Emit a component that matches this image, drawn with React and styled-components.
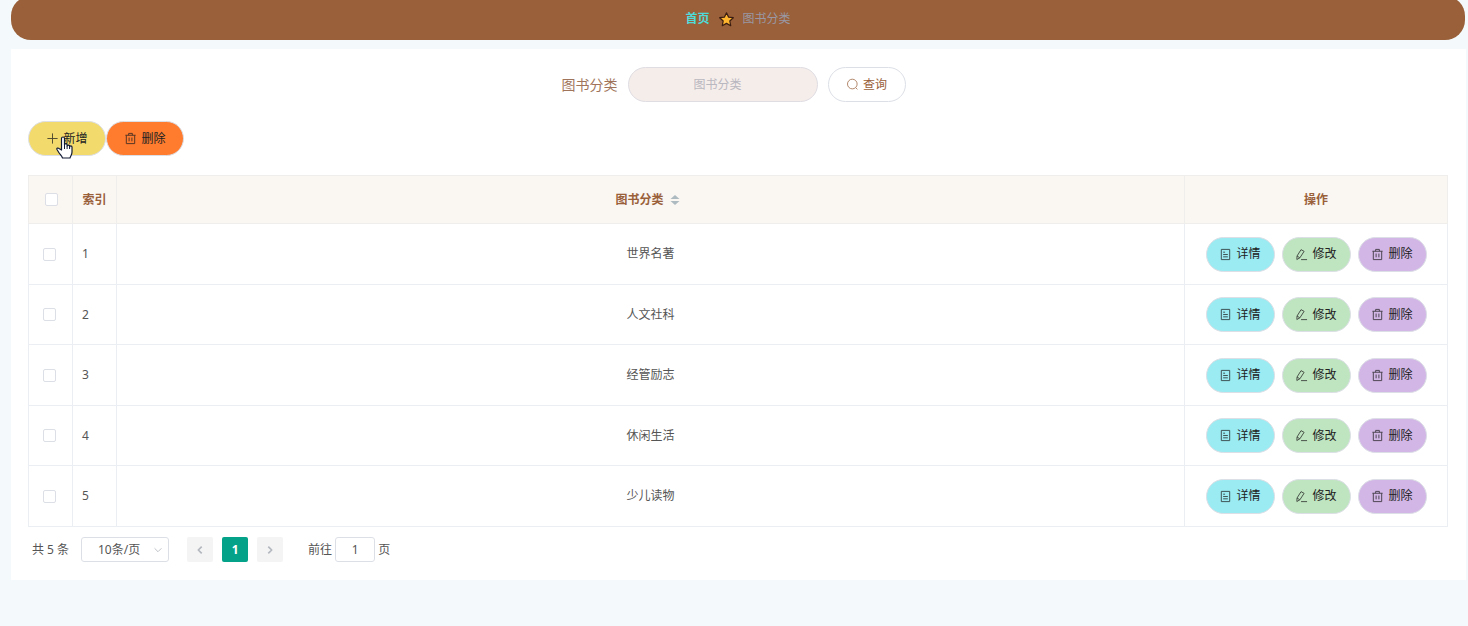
import React from "react";
import styled, { createGlobalStyle } from "styled-components";

const GlobalStyle = createGlobalStyle`
  *, *::before, *::after { box-sizing: border-box; }
  body {
    margin: 0;
    background: #f4fafb;
    color: #555;
    font: 12px/20px "Noto Sans", "Noto Sans CJK SC", sans-serif;
  }
  #root { display: flow-root; }
  button, input, select { font: inherit; color: inherit; }
`;

const Page = styled.div`
  min-height: 100vh;
  padding: 0 2px 0 11px;
  overflow: hidden;
`;

const Breadcrumb = styled.nav`
  display: flex;
  align-items: center;
  justify-content: center;
  gap: 9px;
  height: 44px;
  margin: -4px 1px 9px 0;
  padding-top: 2px;
  border-radius: 20px;
  background: #99603a;
  color: #9a98a4;
`;

const HomeLink = styled.a`
  color: #4fdbd9;
  font-weight: 700;
  text-decoration: none;
`;

const Panel = styled.main`
  padding: 18px;
  padding-left: 17px;
  background: #fff;
`;

const SearchForm = styled.form`
  display: flex;
  align-items: center;
  justify-content: center;
  gap: 10px;
  padding-right: 9px;
`;

const SearchLabel = styled.label`
  color: #a0745a;
  font-size: 14px;
`;

const SearchInput = styled.input`
  width: 190px;
  height: 35px;
  padding: 0 22px 0 12px;
  border: 1px solid #dfdde2;
  border-radius: 18px;
  background: #f5edea;
  text-align: center;
  &::placeholder { color: #b9b7bf; }
`;

const PillButton = styled.button`
  display: inline-flex;
  align-items: center;
  justify-content: center;
  gap: 4px;
  width: ${(p) => p.$width || 78}px;
  height: 35px;
  padding: 0;
  border: 1px solid #dcdfe6;
  border-radius: 18px;
  background: ${(p) => p.$bg};
  color: ${(p) => p.$color || "#222"};
  cursor: pointer;
  & > svg { opacity: 0.8; }
`;

const Toolbar = styled.div`
  position: relative;
  display: flex;
  margin: 19px 0;
`;

const HandCursor = styled.svg`
  position: absolute;
  left: 28px;
  top: 15px;
  width: 17px;
  height: 23px;
  pointer-events: none;
`;

const Table = styled.table`
  width: 100%;
  table-layout: fixed;
  border-collapse: collapse;
  border: 1px solid #ebeef2;
`;

const HeadRow = styled.tr`
  height: 48px;
  background: #faf6f2;
  color: #99603a;
`;

const Row = styled.tr`
  height: 60px;
  &:nth-child(odd) { height: 61px; }
`;

const HeadCell = styled.th`
  width: ${(p) => (p.$width ? `${p.$width}px` : "auto")};
  padding: 0;
  border: 1px solid #f0eeed;
  text-align: center;
`;

const Cell = styled.td`
  padding: ${(p) => (p.$left ? "0 9px" : "0")};
  border: 1px solid #ebeef2;
  text-align: ${(p) => (p.$left ? "left" : "center")};
`;

const CheckBox = styled.input`
  display: block;
  appearance: none;
  width: 13px;
  height: 13px;
  margin: 0 0 0 ${(p) => (p.$head ? 16 : 14)}px;
  border: 1px solid #dcdfe6;
  border-radius: 2px;
  background: #fff;
`;

const SortLabel = styled.span`
  display: inline-flex;
  align-items: center;
  gap: 6px;
  padding-right: 6px;
`;

const Actions = styled.div`
  display: flex;
  justify-content: center;
  gap: 7px;
`;

const Pagination = styled.div`
  display: flex;
  align-items: center;
  height: 25px;
  margin-top: 10px;
  padding-left: 4px;
`;

const SelectBox = styled.div`
  display: grid;
  align-items: center;
  margin: 0 18px 0 12px;
  & > * { grid-area: 1 / 1; }
  & > svg { justify-self: end; margin-right: 5px; color: #b4b8bf; pointer-events: none; }
`;

const SizeSelect = styled.select`
  appearance: none;
  width: 88px;
  height: 25px;
  padding: 0 14px 0 2px;
  border: 1px solid #dcdfe6;
  border-radius: 3px;
  background: #fff;
  text-align: center;
  text-align-last: center;
`;

const PageButton = styled.button`
  display: grid;
  place-items: center;
  width: 26px;
  height: 25px;
  padding: 0;
  border: 0;
  border-radius: 2px;
  background: ${(p) => (p.$active ? "#04a288" : "#f4f4f5")};
  color: ${(p) => (p.$active ? "#fff" : "#b4b8bf")};
  font-weight: 700;
`;

const Pager = styled.div`
  display: flex;
  gap: 9px;
  margin-right: 25px;
`;

const Jump = styled.label`
  display: flex;
  align-items: center;
  gap: 3px;
`;

const JumpInput = styled.input`
  width: 40px;
  height: 25px;
  padding: 0;
  border: 1px solid #dcdfe6;
  border-radius: 3px;
  text-align: center;
`;

const shapes = {
  plus: "M7 1.5v11M1.5 7h11",
  search: "M10.5 10.5l1.8 1.8M12 6.5a5.2 5.2 0 1 1-10.4 0a5.2 5.2 0 0 1 10.4 0",
  trash: "M1.5 3.5h11M5 3.5v-2h4v2M2.5 3.5v9h9v-9M5.5 6v4M8.5 6v4",
  detail: "M2.5 1.5h9v11h-9zM4.5 4.5h2M4.5 7h5M4.5 9.5h5",
  edit: "M6.5 1.8L9.8 3.6L5.2 10.6L2 12.4L2.2 8.6zM2.2 8.6L5.2 10.6M6.5 12.5h6.5",
  down: "M3 5l4 4 4-4",
  left: "M9 3L5 7l4 4",
  right: "M5 3l4 4-4 4",
};

const Icon = ({ name, size = 13, stroke = 1 }) => (
  <svg width={size} height={size} viewBox="0 0 14 14" fill="none" stroke="currentColor" strokeWidth={stroke} strokeLinejoin="round" aria-hidden="true">
    <path d={shapes[name]} />
  </svg>
);

const Star = () => (
  <svg width="15" height="15" viewBox="0 0 15 15" aria-hidden="true">
    <path d="M7.5 0.8l2 4.3 4.8.6-3.500 3.300.9 4.700-4.200-2.300-4.200 2.300.9-4.700L.7 5.700l4.800-.6z" fill="#ffb52e" stroke="#3a1d10" strokeWidth="1.2" strokeLinejoin="round" />
  </svg>
);

const SortIcon = () => (
  <svg width="10" height="12" viewBox="0 0 10 12" fill="#adbbc0" aria-hidden="true">
    <path d="M5 1l4.500 4h-9zM5 11l4.500-4h-9z" />
  </svg>
);

const rows = ["世界名著", "人文社科", "经管励志", "休闲生活", "少儿读物"];

export default function App() {
  return (
    <Page>
      <GlobalStyle />
      <Breadcrumb>
        <HomeLink href="#">首页</HomeLink>
        <Star />
        <span>图书分类</span>
      </Breadcrumb>
      <Panel>
        <SearchForm onSubmit={(e) => e.preventDefault()}>
          <SearchLabel htmlFor="category">图书分类</SearchLabel>
          <SearchInput id="category" placeholder="图书分类" />
          <PillButton $bg="#fff" $color="#99603a"><Icon name="search" />查询</PillButton>
        </SearchForm>
        <Toolbar>
          <PillButton type="button" $bg="#f3da6c"><Icon name="plus" />新增</PillButton>
          <PillButton type="button" $bg="#ff7b2e"><Icon name="trash" />删除</PillButton>
          <HandCursor viewBox="0 0 17 23" aria-hidden="true">
            <path d="M5.5 14V2.5a1.5 1.5 0 0 1 3 0V9a1.3 1.3 0 0 1 2.6 0v1a1.3 1.3 0 0 1 2.5 0v1a1.2 1.2 0 0 1 2.4 0v5c0 3-1.5 4-2 6H6.5c-.5-2-2.5-3.5-4-6L1 13.5c-.6-1.3 1-2 2-1z" fill="#fff" stroke="#111a33" strokeWidth="1.2" strokeLinejoin="round" />
            <path d="M8.5 9v4M11.1 10v3M13.6 11v2" stroke="#111a33" />
          </HandCursor>
        </Toolbar>
        <Table>
          <thead>
            <HeadRow>
              <HeadCell $width={44}><CheckBox $head type="checkbox" aria-label="全选" /></HeadCell>
              <HeadCell $width={44}>索引</HeadCell>
              <HeadCell><SortLabel>图书分类<SortIcon /></SortLabel></HeadCell>
              <HeadCell $width={263}>操作</HeadCell>
            </HeadRow>
          </thead>
          <tbody>
            {rows.map((name, i) => (
              <Row key={name}>
                <Cell><CheckBox type="checkbox" aria-label={name} /></Cell>
                <Cell $left>{i + 1}</Cell>
                <Cell>{name}</Cell>
                <Cell>
                  <Actions>
                    <PillButton type="button" $width={69} $bg="#9aebf2"><Icon name="detail" />详情</PillButton>
                    <PillButton type="button" $width={69} $bg="#bfe5c0"><Icon name="edit" />修改</PillButton>
                    <PillButton type="button" $width={69} $bg="#d2b6e6"><Icon name="trash" />删除</PillButton>
                  </Actions>
                </Cell>
              </Row>
            ))}
          </tbody>
        </Table>
        <Pagination>
          <span>共 5 条</span>
          <SelectBox>
            <SizeSelect aria-label="每页条数"><option>10条/页</option></SizeSelect>
            <Icon name="down" size={12} />
          </SelectBox>
          <Pager>
            <PageButton type="button" aria-label="上一页"><Icon name="left" size={12} stroke={2} /></PageButton>
            <PageButton type="button" $active>1</PageButton>
            <PageButton type="button" aria-label="下一页"><Icon name="right" size={12} stroke={2} /></PageButton>
          </Pager>
          <Jump>前往<JumpInput defaultValue="1" />页</Jump>
        </Pagination>
      </Panel>
    </Page>
  );
}
